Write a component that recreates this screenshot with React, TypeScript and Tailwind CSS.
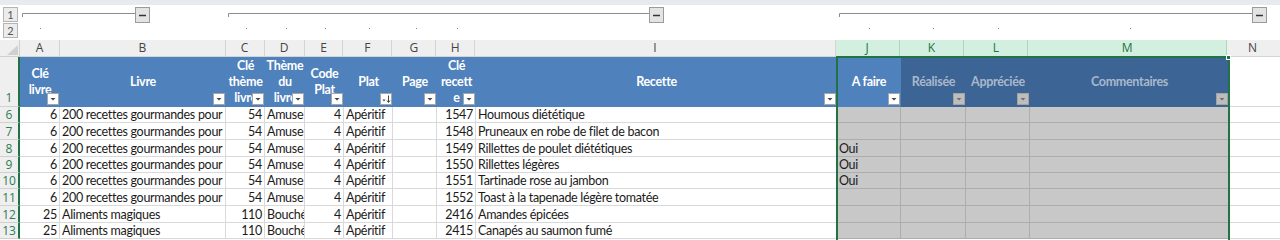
import React from "react";

type Col = { id: string; w: string; num?: boolean; sel?: boolean };

const cols: Col[] = [
  { id: "A", w: "w-[40px]", num: true },
  { id: "B", w: "w-[166px]" },
  { id: "C", w: "w-[39px]", num: true },
  { id: "D", w: "w-[40px]" },
  { id: "E", w: "w-[39px]", num: true },
  { id: "F", w: "w-[49px]" },
  { id: "G", w: "w-[44px]" },
  { id: "H", w: "w-[39px]", num: true },
  { id: "I", w: "w-[361px]" },
  { id: "J", w: "w-[64px]", sel: true },
  { id: "K", w: "w-[65px]", sel: true },
  { id: "L", w: "w-[64px]", sel: true },
  { id: "M", w: "w-[199px]", sel: true },
];

const headers: string[][] = [
  ["Clé", "livre"],
  ["Livre"],
  ["Clé", "thème", "livre"],
  ["Thème", "du", "livre"],
  ["Code", "Plat"],
  ["Plat"],
  ["Page"],
  ["Clé", "recett", "e"],
  ["Recette"],
  ["A faire"],
  ["Réalisée"],
  ["Appréciée"],
  ["Commentaires"],
];

const rows: { n: number; h: string; v: string[] }[] = [
  { n: 6, h: "h-[16px]", v: ["6", "200 recettes gourmandes pour maigrir", "54", "Amuse-bouches", "4", "Apéritif", "", "1547", "Houmous diététique", "", "", "", ""] },
  { n: 7, h: "h-[17px]", v: ["6", "200 recettes gourmandes pour maigrir", "54", "Amuse-bouches", "4", "Apéritif", "", "1548", "Pruneaux en robe de filet de bacon", "", "", "", ""] },
  { n: 8, h: "h-[17px]", v: ["6", "200 recettes gourmandes pour maigrir", "54", "Amuse-bouches", "4", "Apéritif", "", "1549", "Rillettes de poulet diététiques", "Oui", "", "", ""] },
  { n: 9, h: "h-[16px]", v: ["6", "200 recettes gourmandes pour maigrir", "54", "Amuse-bouches", "4", "Apéritif", "", "1550", "Rillettes légères", "Oui", "", "", ""] },
  { n: 10, h: "h-[16px]", v: ["6", "200 recettes gourmandes pour maigrir", "54", "Amuse-bouches", "4", "Apéritif", "", "1551", "Tartinade rose au jambon", "Oui", "", "", ""] },
  { n: 11, h: "h-[17px]", v: ["6", "200 recettes gourmandes pour maigrir", "54", "Amuse-bouches", "4", "Apéritif", "", "1552", "Toast à la tapenade légère tomatée", "", "", "", ""] },
  { n: 12, h: "h-[17px]", v: ["25", "Aliments magiques", "110", "Bouchées", "4", "Apéritif", "", "2416", "Amandes épicées", "", "", "", ""] },
  { n: 13, h: "h-[16px]", v: ["25", "Aliments magiques", "110", "Bouchées", "4", "Apéritif", "", "2415", "Canapés au saumon fumé", "", "", "", ""] },
];

const dots = [40, 246, 286, 325, 369, 416, 457, 869, 933, 998, 1130];

function FilterBtn({ dim, sort }: { dim?: boolean; sort?: boolean }) {
  return (
    <svg width="12" height="12" viewBox="0 0 12 12" className="absolute right-[1px] bottom-[2px]">
      <rect x="0.5" y="0.5" width="11" height="11" fill={dim ? "#bdbdbd" : "#ffffff"} stroke={dim ? "#a3a3a3" : "#a6a6a6"} />
      {sort ? (
        <>
          <path d="M2.5 6.5 L5.5 6.5 L4 8.5 Z" fill="#444" />
          <path d="M8.5 2.5 V9" stroke="#444" strokeWidth="1" />
          <path d="M7 7.5 L8.5 9.5 L10 7.5" stroke="#444" strokeWidth="1" fill="none" />
        </>
      ) : (
        <path d="M3.5 5 L8.5 5 L6 7.5 Z" fill={dim ? "#6f6f6f" : "#444"} />
      )}
    </svg>
  );
}

function OutlineBtn({ x }: { x: number }) {
  return (
    <g>
      <rect x={x + 0.5} y={2.5} width={14} height={15} fill="#e3e3e3" stroke="#9b9b9b" />
      <path d={`M${x + 4} 10.5 H${x + 11}`} stroke="#333" strokeWidth="1.5" />
    </g>
  );
}

export default function App() {
  return (
    <div className="relative w-[1280px] h-[240px] overflow-hidden bg-white font-['Lato','Liberation_Sans',sans-serif] text-[#1a1a1a]">
      {/* bande du haut */}
      <div className="h-[5px] bg-[#e7eaee]" />

      {/* plan / groupes */}
      <div className="flex h-[35px]">
        <div className="w-[20px] pl-[3px] pt-[2px] flex flex-col gap-[1px]">
          <div className="w-[15px] h-[15px] bg-[#ececec] border border-[#b4b4b4] text-[11px] leading-[13px] text-center text-[#555]">1</div>
          <div className="w-[15px] h-[15px] bg-[#ececec] border border-[#b4b4b4] text-[11px] leading-[13px] text-center text-[#555]">2</div>
        </div>
        <svg width="1260" height="35" viewBox="20 5 1260 35" className="block">
          <path d="M22.5 17 V13.5 H136" stroke="#8c8c8c" fill="none" />
          <path d="M228.5 17 V13.5 H649" stroke="#8c8c8c" fill="none" />
          <path d="M839.5 17 V13.5 H1253" stroke="#8c8c8c" fill="none" />
          <g transform="translate(0 5)">
            <OutlineBtn x={135} />
            <OutlineBtn x={649} />
            <OutlineBtn x={1252} />
          </g>
          {dots.map((d) => (
            <rect key={d} x={d} y={28} width={1} height={1} fill="#8a8a8a" />
          ))}
        </svg>
      </div>

      {/* en-têtes de colonnes */}
      <div className="flex h-[17px] text-[12px] leading-[16px] font-['Open_Sans',sans-serif]">
        <div className="w-[20px] bg-[#efefef] border-r border-b border-[#d0d0d0] flex items-end justify-end">
          <svg width="14" height="12" viewBox="0 0 14 12">
            <path d="M13 1 L13 11 L2 11 Z" fill="#d0d0d0" />
          </svg>
        </div>
        {cols.map((c) => (
          <div
            key={c.id}
            className={
              c.sel
                ? `${c.w} bg-[#d3efdf] border-r border-[#a9d8bd] text-[#217346] text-center`
                : `${c.w} bg-[#efefef] border-r border-b border-[#d4d4d4] text-[#444] text-center`
            }
          >
            {c.id}
          </div>
        ))}
        <div className="flex-1 bg-[#efefef] border-b border-[#d4d4d4] text-[#444] text-center pr-[2px]">
          <div className="w-[51px]">N</div>
        </div>
      </div>

      {/* ligne d'en-tête du tableau */}
      <div className="flex h-[50px] text-[12.5px] tracking-[-0.3px] leading-[16px] font-bold">
        <div className="w-[20px] bg-[#efefef] border-r-2 border-r-[#217346] border-b border-b-[#d0d0d0] flex items-end justify-center text-[12px] tracking-normal font-normal text-[#2e7d4f] font-['Open_Sans',sans-serif]">
          1
        </div>
        {cols.map((c, i) => (
          <div
            key={c.id}
            className={`${c.w} relative overflow-hidden flex flex-col items-center justify-center ${
              i >= 10 ? "bg-[#3c6494] text-[#aab8cc]" : "bg-[#4f81bd] text-white"
            }`}
          >
            {headers[i].map((l) => (
              <span key={l} className="whitespace-nowrap">
                {l}
              </span>
            ))}
            <FilterBtn dim={i >= 10} sort={c.id === "F"} />
          </div>
        ))}
        <div className="flex-1 border-b border-[#d9d9d9]" />
      </div>

      {/* données */}
      {rows.map((r) => (
        <div key={r.n} className={`flex ${r.h} text-[12.5px] tracking-[-0.3px] leading-[15px]`}>
          <div className="w-[20px] bg-[#efefef] border-r-2 border-r-[#217346] border-b border-b-[#d0d0d0] text-[12px] tracking-normal text-center text-[#2e7d4f] font-['Open_Sans',sans-serif] flex items-center justify-center">
            {r.n}
          </div>
          {cols.map((c, i) => (
            <div
              key={c.id}
              className={`${c.w} flex items-center overflow-hidden whitespace-nowrap px-[2px] ${
                c.num ? "justify-end" : "justify-start"
              } ${c.sel ? "bg-[#c8c8c8] border-r border-b border-[#adadad]" : "border-r border-b border-[#d9d9d9]"}`}
            >
              {r.v[i]}
            </div>
          ))}
          <div className="flex-1 border-b border-[#d9d9d9]" />
        </div>
      ))}

      {/* sélection des colonnes J:M */}
      <div className="absolute left-[836px] top-[56px] w-[394px] h-[200px] border-2 border-[#217346] pointer-events-none" />
      <div className="absolute left-[1226px] top-[55px] w-[5px] h-[5px] bg-[#217346] border border-white" />
    </div>
  );
}
